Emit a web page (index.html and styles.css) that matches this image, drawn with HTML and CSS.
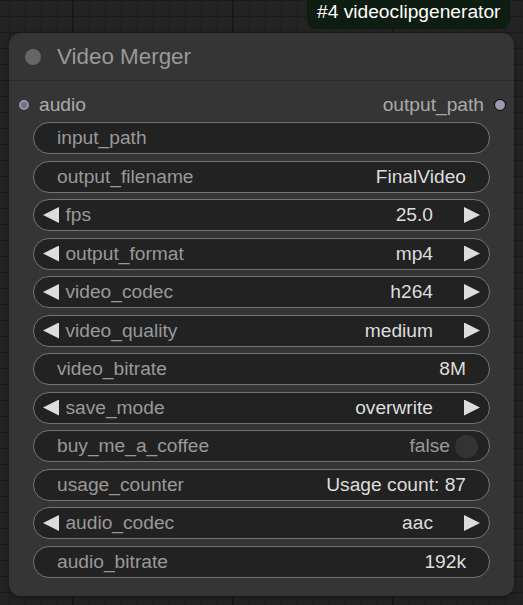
FILE: index.html
```html
<!DOCTYPE html>
<html>
<head>
<meta charset="utf-8">
<link rel="stylesheet" href="styles.css">
</head>
<body>
<div class="canvas">
  <div class="badge">#4 videoclipgenerator</div>
  <div class="node">
    <div class="title">
      <span class="title-dot"></span>
      <span class="title-text">Video Merger</span>
    </div>
    <div class="slots">
      <div class="slot in"><span class="dot-in"></span><span>audio</span></div>
      <div class="slot out"><span>output_path</span><span class="dot-out"></span></div>
    </div>
    <div class="widgets">
      <div class="w"><span class="lbl">input_path</span></div>
      <div class="w"><span class="lbl">output_filename</span><span class="val">FinalVideo</span></div>
      <div class="w combo"><span class="arr l"></span><span class="lbl">fps</span><span class="val">25.0</span><span class="arr r"></span></div>
      <div class="w combo"><span class="arr l"></span><span class="lbl">output_format</span><span class="val">mp4</span><span class="arr r"></span></div>
      <div class="w combo"><span class="arr l"></span><span class="lbl">video_codec</span><span class="val">h264</span><span class="arr r"></span></div>
      <div class="w combo"><span class="arr l"></span><span class="lbl">video_quality</span><span class="val">medium</span><span class="arr r"></span></div>
      <div class="w"><span class="lbl">video_bitrate</span><span class="val">8M</span></div>
      <div class="w combo"><span class="arr l"></span><span class="lbl">save_mode</span><span class="val">overwrite</span><span class="arr r"></span></div>
      <div class="w toggle"><span class="lbl">buy_me_a_coffee</span><span class="val dim">false</span><span class="knob"></span></div>
      <div class="w"><span class="lbl">usage_counter</span><span class="val">Usage count: 87</span></div>
      <div class="w combo"><span class="arr l"></span><span class="lbl">audio_codec</span><span class="val">aac</span><span class="arr r"></span></div>
      <div class="w"><span class="lbl">audio_bitrate</span><span class="val">192k</span></div>
    </div>
  </div>
</div>
</body>
</html>
```
FILE: styles.css
```css
html, body {
  margin: 0;
  padding: 0;
}
body {
  width: 523px;
  height: 605px;
  overflow: hidden;
  font-family: "Liberation Sans", Arial, sans-serif;
}
.canvas {
  position: relative;
  width: 523px;
  height: 605px;
  background-color: #232323;
  background-image:
    linear-gradient(to right, #181818 2px, transparent 2px),
    linear-gradient(to right, #1b1b1b 1px, transparent 1px),
    linear-gradient(to bottom, #1b1b1b 1px, transparent 1px);
  background-size: 160px 160px, 16px 16px, 16px 16px;
  background-position: 72px 0, 9px 0, 0 0;
}
.badge {
  position: absolute;
  left: 307px;
  top: -10px;
  width: 203px;
  height: 39px;
  box-sizing: border-box;
  padding: 11px 0 0 10px;
  background: #0f1c11;
  border-radius: 9px;
  color: #ffffff;
  font-size: 19.2px;
  line-height: 22px;
  white-space: nowrap;
}
.node {
  position: absolute;
  left: 9px;
  top: 33px;
  width: 505px;
  height: 563px;
  background: #353535;
  border-radius: 12px;
  box-shadow: 0 2px 6px rgba(0, 0, 0, 0.35);
  display: flex;
  flex-direction: column;
}
.title {
  height: 48px;
  box-sizing: border-box;
  border-bottom: 1px solid #2c2c2c;
  display: flex;
  align-items: center;
  padding-left: 16px;
}
.title-dot {
  width: 16px;
  height: 16px;
  border-radius: 50%;
  background: #666;
  margin-top: 1px;
}
.title-text {
  margin-left: 16px;
  color: #999;
  font-size: 22.4px;
  margin-top: 1px;
}
.slots {
  height: 41px;
  display: flex;
  justify-content: space-between;
  align-items: flex-start;
  color: #aaa;
  font-size: 19.2px;
  line-height: 22px;
}
.slot {
  display: flex;
  align-items: center;
  margin-top: 13px;
}
.slot.in { padding-left: 10px; }
.slot.out { padding-right: 8px; }
.dot-in {
  width: 6px;
  height: 6px;
  border-radius: 50%;
  background: #6e6e84;
  border: 2.5px solid #9494aa;
  margin-right: 10px;
}
.dot-out {
  width: 10px;
  height: 10px;
  border-radius: 50%;
  background: #9a9ab0;
  border: 1.5px solid #000;
  margin-left: 10px;
}
.widgets {
  display: flex;
  flex-direction: column;
  gap: 6.5px;
  padding: 0 24px 0 24px;
}
.w {
  height: 32px;
  box-sizing: border-box;
  border: 1px solid #747474;
  border-radius: 16px;
  background: #222;
  display: flex;
  align-items: center;
  padding: 0 23px;
  font-size: 19.2px;
  white-space: nowrap;
}
.lbl {
  color: #999;
  flex: 1;
}
.val {
  color: #ddd;
}
.val.dim {
  color: #999;
}
.w.combo {
  padding: 0 9px 0 9px;
}
.w.combo .lbl {
  margin-left: 6.4px;
}
.w.combo .val {
  margin-right: 31px;
}
.arr {
  width: 16px;
  height: 16px;
  background: #ddd;
}
.arr.l {
  clip-path: polygon(100% 0, 0 50%, 100% 100%);
}
.arr.r {
  clip-path: polygon(0 0, 100% 50%, 0 100%);
}
.w.toggle {
  padding-right: 11px;
}
.knob {
  width: 23px;
  height: 23px;
  border-radius: 50%;
  background: #333;
  margin-left: 5px;
}
```
